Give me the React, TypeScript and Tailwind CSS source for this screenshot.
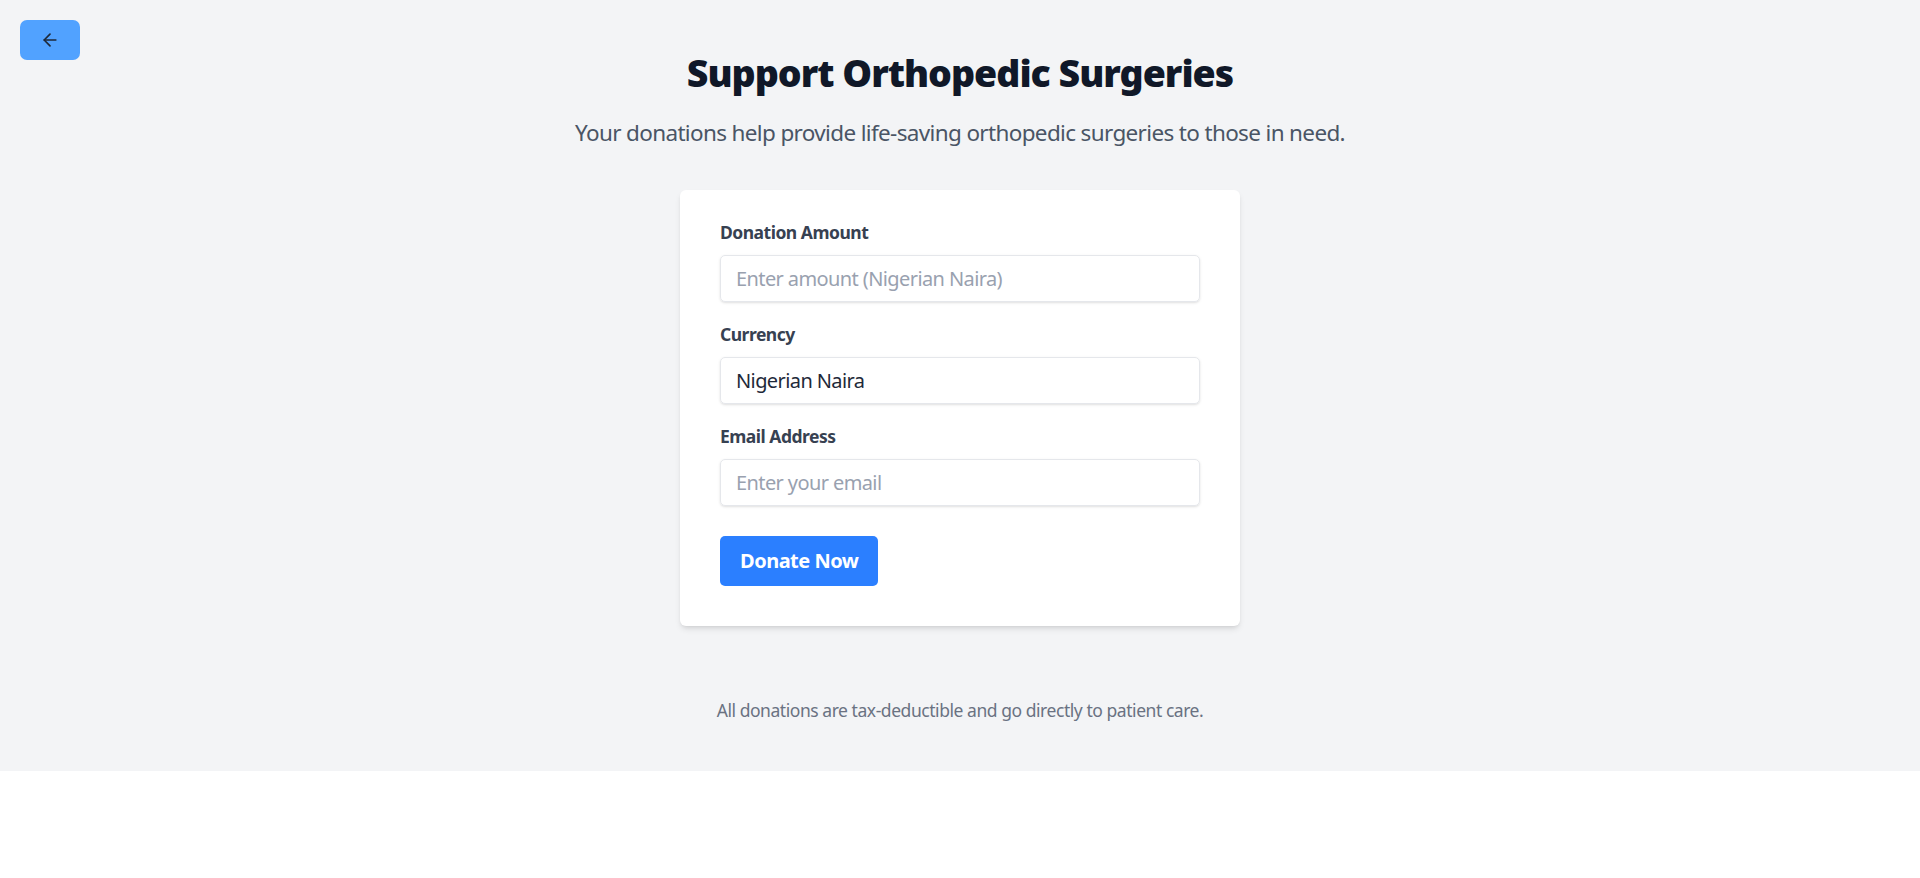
import { ArrowLeft } from "lucide-react";

const font = { fontFamily: '"Noto Sans", "Open Sans", sans-serif' };

const labelCls = "block text-[#374151] text-[17.5px] leading-[25px] font-bold tracking-[-0.5px] mb-[10px]";
const inputCls =
  "w-full h-[47px] px-[15px] border border-gray-200 rounded-[5px] shadow text-[20px] tracking-[-0.6px] text-gray-800 placeholder:text-gray-400 outline-none";

const Field = ({ label, placeholder, value }: { label: string; placeholder?: string; value?: string }) => (
  <div className="mb-[20px]">
    <label className={labelCls}>{label}</label>
    <input className={inputCls} placeholder={placeholder} defaultValue={value} />
  </div>
);

const App = () => {
  return (
    <div className="bg-white min-h-screen" style={font}>
      <div className="relative bg-gray-100 pt-[50px] pb-[48px] px-[20px]">
        {/* back button */}
        <button className="absolute top-[20px] left-[20px] w-[60px] h-[40px] bg-blue-400 rounded-[7px] flex items-center justify-center text-gray-800">
          <ArrowLeft size={20} strokeWidth={2} />
        </button>

        <h1 className="text-center text-[37.5px] leading-[45px] font-black tracking-[-1px] text-gray-900 mb-[20px]">
          Support Orthopedic Surgeries
        </h1>
        <p className="text-center text-[22.5px] leading-[35px] tracking-[-0.65px] text-gray-600 mb-[40px]">
          Your donations help provide life-saving orthopedic surgeries to those in need.
        </p>

        <div className="w-[560px] mx-auto bg-white rounded-[6px] shadow-md px-[40px] pt-[30px] pb-[40px]">
          <Field label="Donation Amount" placeholder="Enter amount (Nigerian Naira)" />
          <Field label="Currency" value="Nigerian Naira" />
          <div className="mb-[30px]">
            <label className={labelCls}>Email Address</label>
            <input className={inputCls} placeholder="Enter your email" />
          </div>
          <button className="h-[50px] px-[20px] bg-blue-500 text-white text-[20px] font-bold tracking-[-0.5px] rounded-[5px]">
            Donate Now
          </button>
        </div>

        <p className="mt-[72px] text-center text-[17.5px] leading-[25px] tracking-[-0.45px] text-gray-500">
          All donations are tax-deductible and go directly to patient care.
        </p>
      </div>
    </div>
  );
};

export default App;
